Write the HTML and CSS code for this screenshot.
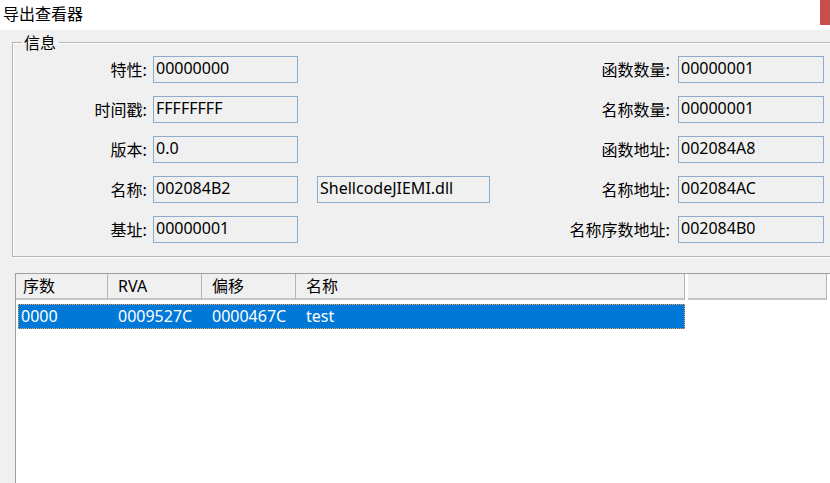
FILE: index.html
```html
<!DOCTYPE html>
<html lang="zh">
<head>
<meta charset="utf-8">
<title>导出查看器</title>
<link rel="stylesheet" href="styles.css">
</head>
<body>
<div class="window">
  <div class="titlebar">
    <span class="title">导出查看器</span>
    <span class="close"></span>
  </div>
  <div class="client">
    <fieldset class="info">
      <legend>信息</legend>
      <div class="grid">
        <div class="lbl">特性:</div><div class="box">00000000</div><div></div><div class="lbl rl">函数数量:</div><div class="box">00000001</div>
        <div class="lbl">时间戳:</div><div class="box">FFFFFFFF</div><div></div><div class="lbl rl">名称数量:</div><div class="box">00000001</div>
        <div class="lbl">版本:</div><div class="box">0.0</div><div></div><div class="lbl rl">函数地址:</div><div class="box">002084A8</div>
        <div class="lbl">名称:</div><div class="box">002084B2</div><div class="box wide">ShellcodeJIEMI.dll</div><div class="lbl rl">名称地址:</div><div class="box">002084AC</div>
        <div class="lbl">基址:</div><div class="box">00000001</div><div></div><div class="lbl rl">名称序数地址:</div><div class="box">002084B0</div>
      </div>
    </fieldset>
    <div class="list">
      <div class="header">
        <div class="hcell c1">序数</div>
        <div class="hcell c2">RVA</div>
        <div class="hcell c3">偏移</div>
        <div class="hcell c4">名称</div>
        <div class="hcell c5"></div>
      </div>
      <div class="rows">
        <div class="row selected">
          <div class="cell c1">0000</div>
          <div class="cell c2">0009527C</div>
          <div class="cell c3">0000467C</div>
          <div class="cell c4">test</div>
        </div>
      </div>
    </div>
  </div>
</div>
</body>
</html>
```

FILE: styles.css
```css
html, body {
  margin: 0;
  padding: 0;
}
body {
  width: 830px;
  height: 483px;
  overflow: hidden;
  background: #f0f0f0;
  font-family: "Noto Sans", "Noto Sans CJK SC", sans-serif;
  font-size: 16px;
  color: #000;
}
.window {
  display: flex;
  flex-direction: column;
  height: 483px;
}
.titlebar {
  height: 30px;
  background: #fff;
  display: flex;
  justify-content: space-between;
  align-items: flex-start;
  flex: none;
}
.title {
  padding-left: 3px;
  line-height: 26px;
  font-family: "Noto Sans CJK SC", sans-serif;
}
.close {
  width: 10px;
  height: 25px;
  background: #c94d4d;
}
.client {
  flex: 1;
  display: flex;
  flex-direction: column;
  padding: 2px 0 0 12px;
  min-height: 0;
}
.info {
  margin: 0;
  padding: 0 0 13px 0;
  width: 840px;
  box-sizing: border-box;
  border: 1px solid #b4b4b4;
  box-shadow: inset 1px 1px 0 #fff, 1px 1px 0 #fff;
  min-width: 0;
}
.info legend {
  margin-left: 9px;
  padding: 0 3px 0 2px;
  line-height: 20px;
  font-family: "Noto Sans CJK SC", sans-serif;
}
.grid {
  display: grid;
  grid-template-columns: 140px 164px 173px 188px 146px;
  grid-auto-rows: 27px;
  row-gap: 13px;
  padding-top: 4px;
}
.lbl {
  text-align: right;
  padding-right: 6px;
  line-height: 27px;
  font-family: "Noto Sans CJK SC", sans-serif;
  white-space: nowrap;
}
.lbl.rl {
  padding-right: 8px;
}
.box {
  width: 145px;
  height: 27px;
  box-sizing: border-box;
  border: 1px solid #8eabcc;
  background: #f0f0f0;
  padding: 0 2px;
  line-height: 23px;
  white-space: nowrap;
  overflow: hidden;
}
.box.wide {
  width: 173px;
}
.grid > .box:nth-child(5n) {
  width: 146px;
}
.list {
  margin: 16px 0 0 3px;
  flex: 1;
  border-left: 1px solid #a0a0a0;
  border-top: 1px solid #a0a0a0;
  background: #fff;
}
.header {
  display: flex;
  height: 26px;
  background: #fff;
}
.hcell {
  box-sizing: border-box;
  height: 26px;
  background: #f0f0f0;
  border-right: 1px solid #b4b4b4;
  border-bottom: 2px solid #c4c4c4;
  line-height: 24px;
  padding-left: 10px;
  font-family: "Noto Sans", "Noto Sans CJK SC", sans-serif;
}
.hcell.c1 { padding-left: 7px; }
.c1 { width: 92px; }
.c2 { width: 94px; }
.c3 { width: 94px; }
.c4 { width: 389px; }
.hcell.c4 { margin-right: 3px; }
.c5 { width: 139px; }
.rows {
  padding: 4px 0 0 2px;
}
.row {
  display: flex;
  height: 25px;
  width: 667px;
}
.row.selected {
  background: #0078d7;
  color: #fff;
  outline: 1px dotted #f0a050;
  outline-offset: -1px;
}
.cell {
  box-sizing: border-box;
  line-height: 25px;
  padding-left: 3px;
  white-space: nowrap;
}
.row .c1 { width: 97px; padding-left: 3px; }
.row .c2 { width: 94px; }
.row .c3 { width: 94px; }
.row .c4 { flex: 1; }
```
